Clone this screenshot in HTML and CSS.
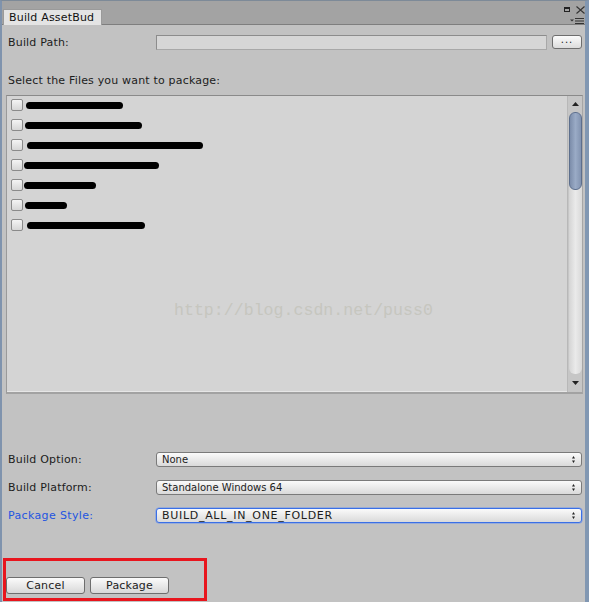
FILE: index.html
```html
<!DOCTYPE html>
<html>
<head>
<meta charset="utf-8">
<link rel="stylesheet" href="styles.css">
</head>
<body>
<div class="window">
  <div class="titlebar">
    <div class="tab">Build AssetBud</div>
    <div class="winctl">
      <div class="ctl-top">
        <svg class="ico-max" width="6" height="5" viewBox="0 0 6 5"><rect x="0.5" y="0.5" width="5" height="4" fill="none" stroke="#222"/><rect x="0" y="0" width="6" height="2" fill="#222"/></svg>
        <svg class="ico-close" width="9" height="8" viewBox="0 0 9 8"><path d="M0.5 0.5L8.5 7.5M8.5 0.5L0.5 7.5" stroke="#333" stroke-width="1.1" fill="none"/></svg>
      </div>
      <svg class="ico-menu" width="15" height="6" viewBox="0 0 15 6"><path d="M0 1.5H4L2 3.5Z" fill="#333"/><rect x="5" y="0" width="9" height="1" fill="#333"/><rect x="5" y="2.5" width="9" height="1" fill="#333"/><rect x="5" y="5" width="9" height="1" fill="#333"/></svg>
    </div>
  </div>
  <div class="content">
    <div class="field-row path-row">
      <div class="label">Build Path:</div>
      <div class="textfield"></div>
      <div class="btn-dots">...</div>
    </div>
    <div class="section-label">Select the Files you want to package:</div>
    <div class="listbox">
      <div class="list-items">
        <div class="item"><span class="check"></span><span class="redact" style="margin-left:3px;width:97px"></span></div>
        <div class="item"><span class="check"></span><span class="redact" style="margin-left:2px;width:117px"></span></div>
        <div class="item"><span class="check"></span><span class="redact" style="margin-left:4px;width:176px"></span></div>
        <div class="item"><span class="check"></span><span class="redact" style="margin-left:1px;width:135px"></span></div>
        <div class="item"><span class="check"></span><span class="redact" style="margin-left:1px;width:72px"></span></div>
        <div class="item"><span class="check"></span><span class="redact" style="margin-left:2px;width:42px"></span></div>
        <div class="item"><span class="check"></span><span class="redact" style="margin-left:4px;width:118px"></span></div>
        <div class="watermark">http://blog.csdn.net/puss0</div>
      </div>
      <div class="scrollbar">
        <div class="sb-arrow"><svg width="7" height="4" viewBox="0 0 7 4"><path d="M3.5 0L7 4H0Z" fill="#222"/></svg></div>
        <div class="sb-track"><div class="sb-thumb"></div></div>
        <div class="sb-arrow sb-down"><svg width="7" height="4" viewBox="0 0 7 4"><path d="M0 0H7L3.5 4Z" fill="#222"/></svg></div>
      </div>
    </div>
    <div class="options">
      <div class="field-row">
        <div class="label">Build Option:</div>
        <div class="dropdown"><span>None</span><svg class="updown" width="3" height="7" viewBox="0 0 3 7"><path d="M1.5 0L3 2.5H0Z M0 4.5H3L1.5 7Z" fill="#222"/></svg></div>
      </div>
      <div class="field-row">
        <div class="label">Build Platform:</div>
        <div class="dropdown"><span>Standalone Windows 64</span><svg class="updown" width="3" height="7" viewBox="0 0 3 7"><path d="M1.5 0L3 2.5H0Z M0 4.5H3L1.5 7Z" fill="#222"/></svg></div>
      </div>
      <div class="field-row">
        <div class="label label-focus">Package Style:</div>
        <div class="dropdown dropdown-focus"><span class="caps">BUILD_ALL_IN_ONE_FOLDER</span><svg class="updown" width="3" height="7" viewBox="0 0 3 7"><path d="M1.5 0L3 2.5H0Z M0 4.5H3L1.5 7Z" fill="#222"/></svg></div>
      </div>
    </div>
    <div class="buttons">
      <div class="btn">Cancel</div>
      <div class="btn">Package</div>
    </div>
  </div>
  <div class="annot"></div>
</div>
</body>
</html>
```

FILE: styles.css
```css
* { box-sizing: border-box; }
html, body { margin: 0; padding: 0; }
body {
  width: 589px;
  height: 602px;
  overflow: hidden;
  background: #c2c2c2;
  font-family: "DejaVu Sans", Verdana, sans-serif;
  font-size: 11px;
  letter-spacing: 0.18px;
  color: #1c1c1c;
}
.window {
  position: relative;
  width: 589px;
  height: 602px;
  border-top: 1px solid #7d8a98;
  border-left: 2px solid #7f93ad;
  border-right: 4px solid #8197b2;
  background: #c2c2c2;
  display: flex;
  flex-direction: column;
}
.titlebar {
  height: 24px;
  background: #a3a3a3;
  border-bottom: 1px solid #7e7e7e;
  display: flex;
  align-items: flex-end;
  padding-left: 1px;
}
.tab {
  height: 16px;
  margin-bottom: -1px;
  padding: 0 7px 0 5px;
  background: #e4e4e4;
  border: 1px solid #9a9a9a;
  border-bottom: none;
  line-height: 15px;
  color: #111;
}
.winctl {
  margin-left: auto;
  align-self: stretch;
  display: flex;
  flex-direction: column;
  align-items: flex-end;
  padding-top: 4px;
}
.ctl-top {
  display: flex;
  align-items: center;
  gap: 6px;
  height: 9px;
}
.ico-menu { margin-top: 4px; }
.content {
  flex: 1;
  display: flex;
  flex-direction: column;
  padding: 10px 3px 0 6px;
}
.field-row {
  display: flex;
  align-items: center;
  height: 15px;
}
.label {
  width: 148px;
  flex: none;
  white-space: nowrap;
}
.label-focus { color: #1f55e0; letter-spacing: 0.35px; }
.textfield {
  flex: 1;
  height: 15px;
  background: #d6d6d6;
  border: 1px solid #8c8c8c;
  border-bottom-color: #a8a8a8;
  border-right-color: #a8a8a8;
}
.btn-dots {
  width: 30px;
  height: 14px;
  margin-left: 5px;
  margin-top: -1px;
  border: 1px solid #6e6e6e;
  border-radius: 3px;
  background: linear-gradient(#fbfbfb, #dcdcdc);
  font-size: 10px;
  line-height: 8px;
  text-align: center;
  letter-spacing: 1px;
}
.section-label {
  margin-top: 24px;
  height: 14px;
  line-height: 14px;
}
.listbox {
  margin-top: 7px;
  margin-left: -2px;
  margin-right: -1px;
  height: 299px;
  display: flex;
  background: #d4d4d4;
  border-top: 1px solid #8a8a8a;
  border-left: 1px solid #9a9a9a;
  border-right: 1px solid #a6a6a6;
  border-bottom: 2px solid #a2a2a2;
  box-shadow: inset 0 -1px 0 #e6e6e6;
}
.list-items {
  flex: 1;
  position: relative;
  padding-left: 4px;
}
.item {
  height: 20px;
  display: flex;
  align-items: flex-start;
}
.check {
  width: 12px;
  height: 12px;
  margin-top: 3px;
  border: 1px solid #8a8a8a;
  border-radius: 2px;
  background: linear-gradient(#f4f4f4, #d6d6d6);
  flex: none;
}
.redact {
  height: 7px;
  margin-top: 6px;
  background: #000;
  border-radius: 4px;
  flex: none;
}
.watermark {
  position: absolute;
  left: 167px;
  top: 205px;
  font-family: "Liberation Mono", "Courier New", monospace;
  font-size: 16.6px;
  letter-spacing: 0;
  color: #c6c6bf;
  white-space: nowrap;
}
.scrollbar {
  width: 15px;
  flex: none;
  display: flex;
  flex-direction: column;
  align-items: center;
  background: #c6c6c6;
  border-left: 1px solid #b8b8b8;
  padding: 2px 0 0;
}
.sb-arrow {
  height: 14px;
  width: 100%;
  display: flex;
  justify-content: center;
  align-items: center;
  padding-bottom: 2px;
}
.sb-track {
  flex: 1;
  width: 13px;
  background: linear-gradient(90deg, #d4d4d4, #eaeaea 50%, #d8d8d8);
  border-radius: 6px;
  margin-bottom: 6px;
}
.sb-thumb {
  height: 78px;
  width: 13px;
  border-radius: 6px;
  border: 1px solid #5d6f8d;
  background: linear-gradient(90deg, #7c8daa, #9aabc6 50%, #8293b0);
}
.sb-down {
  height: 12px;
  padding-bottom: 6px;
}
.options {
  margin-top: 58px;
  display: flex;
  flex-direction: column;
  gap: 13px;
}
.dropdown {
  flex: 1;
  height: 15px;
  border: 1px solid #7a7a7a;
  border-radius: 3px;
  background: linear-gradient(#fafafa, #dadada);
  display: flex;
  align-items: center;
  padding: 0 6px 0 5px;
  font-size: 10px;
  letter-spacing: 0;
}
.dropdown span { flex: 1; white-space: nowrap; }
.dropdown .caps { font-size: 11px; letter-spacing: 0.7px; }
.dropdown-focus {
  border-color: #3a6fe6;
  box-shadow: 0 0 0 0.5px #6f95ee;
}
.buttons {
  margin-top: 54px;
  margin-left: -2px;
  display: flex;
  gap: 5px;
}
.btn {
  width: 79px;
  height: 17px;
  border: 1px solid #6e6e6e;
  border-radius: 3px;
  background: linear-gradient(#fbfbfb, #d8d8d8);
  text-align: center;
  line-height: 15px;
}
.annot {
  position: absolute;
  left: 1px;
  top: 557px;
  width: 204px;
  height: 43px;
  border: 3px solid #e8151d;
}
```
